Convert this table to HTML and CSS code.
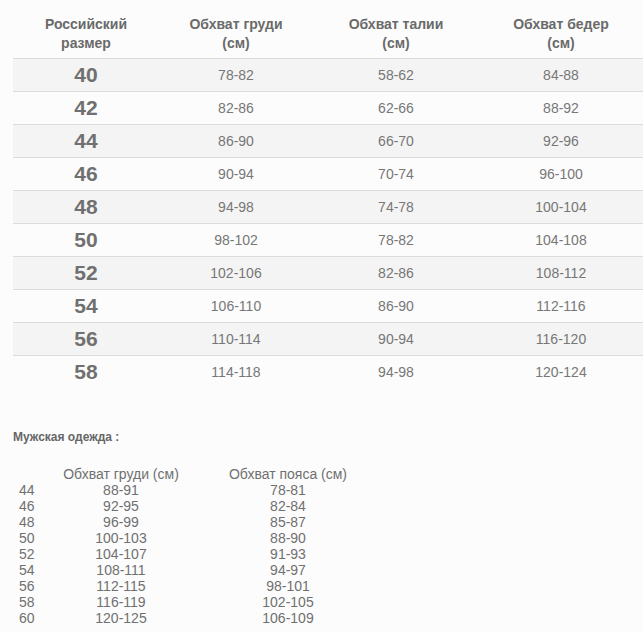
FILE: index.html
```html
<!DOCTYPE html>
<html lang="ru">
<head>
<meta charset="utf-8">
<title>Таблица размеров</title>
<link rel="stylesheet" href="styles.css">
</head>
<body>
<main class="page">
  <table class="sizes">
    <colgroup>
      <col class="c1"><col class="c2"><col class="c3"><col class="c4">
    </colgroup>
    <thead>
      <tr>
        <th>Российский<br>размер</th>
        <th>Обхват груди<br>(см)</th>
        <th>Обхват талии<br>(см)</th>
        <th>Обхват бедер<br>(см)</th>
      </tr>
    </thead>
    <tbody>
      <tr class="odd"><td class="size">40</td><td>78-82</td><td>58-62</td><td>84-88</td></tr>
      <tr><td class="size">42</td><td>82-86</td><td>62-66</td><td>88-92</td></tr>
      <tr class="odd"><td class="size">44</td><td>86-90</td><td>66-70</td><td>92-96</td></tr>
      <tr><td class="size">46</td><td>90-94</td><td>70-74</td><td>96-100</td></tr>
      <tr class="odd"><td class="size">48</td><td>94-98</td><td>74-78</td><td>100-104</td></tr>
      <tr><td class="size">50</td><td>98-102</td><td>78-82</td><td>104-108</td></tr>
      <tr class="odd"><td class="size">52</td><td>102-106</td><td>82-86</td><td>108-112</td></tr>
      <tr><td class="size">54</td><td>106-110</td><td>86-90</td><td>112-116</td></tr>
      <tr class="odd"><td class="size">56</td><td>110-114</td><td>90-94</td><td>116-120</td></tr>
      <tr><td class="size">58</td><td>114-118</td><td>94-98</td><td>120-124</td></tr>
    </tbody>
  </table>

  <h2 class="men-title">Мужская одежда :</h2>

  <table class="men">
    <colgroup>
      <col class="m1"><col class="m2"><col class="m3">
    </colgroup>
    <thead>
      <tr><th></th><th>Обхват груди (см)</th><th>Обхват пояса (см)</th></tr>
    </thead>
    <tbody>
      <tr><td>44</td><td>88-91</td><td>78-81</td></tr>
      <tr><td>46</td><td>92-95</td><td>82-84</td></tr>
      <tr><td>48</td><td>96-99</td><td>85-87</td></tr>
      <tr><td>50</td><td>100-103</td><td>88-90</td></tr>
      <tr><td>52</td><td>104-107</td><td>91-93</td></tr>
      <tr><td>54</td><td>108-111</td><td>94-97</td></tr>
      <tr><td>56</td><td>112-115</td><td>98-101</td></tr>
      <tr><td>58</td><td>116-119</td><td>102-105</td></tr>
      <tr><td>60</td><td>120-125</td><td>106-109</td></tr>
    </tbody>
  </table>
</main>
</body>
</html>
```

FILE: styles.css
```css
html, body {
  margin: 0;
  padding: 0;
  background: #fcfcfc;
  overflow: hidden;
}

.page {
  padding: 1px 0 0 13px;
  font-family: "Liberation Sans", Arial, sans-serif;
  color: #777;
}

.sizes {
  border-collapse: collapse;
  table-layout: fixed;
  width: 630px;
}

.sizes .c1 { width: 146px; }
.sizes .c2 { width: 154px; }
.sizes .c3 { width: 166px; }
.sizes .c4 { width: 164px; }

.sizes th {
  font-size: 14px;
  line-height: 19px;
  font-weight: bold;
  color: #6a6a6a;
  text-align: center;
  padding: 14px 0 5px;
}

.sizes td {
  height: 32px;
  padding: 0;
  border-top: 1px solid #dcdcdc;
  text-align: center;
  vertical-align: middle;
  font-size: 14px;
  color: #777;
}

.sizes tr.odd td {
  background: #f4f4f4;
}

.sizes td.size {
  font-size: 21px;
  font-weight: bold;
  color: #707070;
}

.men-title {
  margin: 42px 0 0;
  font-size: 12px;
  line-height: 14px;
  font-weight: bold;
  color: #666;
}

.men {
  border-collapse: collapse;
  table-layout: fixed;
  width: 377px;
  margin: 22px 0 0 6px;
  font-size: 14px;
  line-height: 16px;
  color: #707070;
}

.men .m1 { width: 43px; }
.men .m2 { width: 118px; }
.men .m3 { width: 216px; }

.men th {
  font-weight: normal;
  padding: 0;
  text-align: center;
  white-space: nowrap;
}

.men td {
  padding: 0;
  text-align: center;
}

.men td:first-child {
  text-align: left;
}
```
